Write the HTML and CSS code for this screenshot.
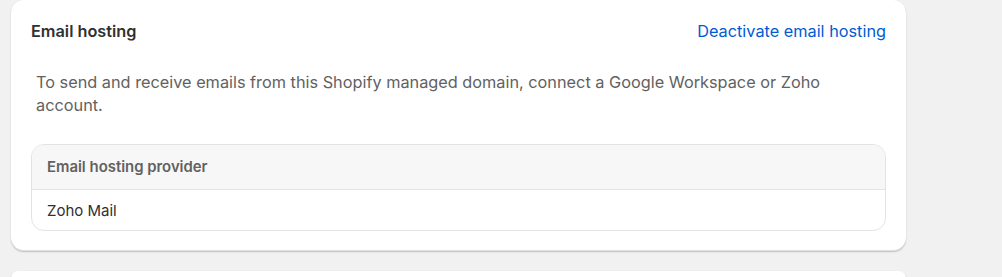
FILE: index.html
```html
<!DOCTYPE html>
<html>
<head>
<meta charset="utf-8">
<link rel="stylesheet" href="styles.css">
</head>
<body>
<div class="page">
  <section class="card">
    <div class="card-head">
      <h2 class="title">Email hosting</h2>
      <a class="link" href="#">Deactivate email hosting</a>
    </div>
    <p class="desc">To send and receive emails from this Shopify managed domain, connect a Google Workspace or Zoho account.</p>
    <div class="table">
      <div class="th">Email hosting provider</div>
      <div class="td">Zoho Mail</div>
    </div>
  </section>
  <section class="card next"></section>
</div>
</body>
</html>
```
FILE: styles.css
```css
html, body {
  margin: 0;
  padding: 0;
  background: #f1f1f1;
  font-family: Inter, "Noto Sans", sans-serif;
  overflow: hidden;
}
.page {
  padding: 0 96px 0 11px;
  display: flex;
  flex-direction: column;
  gap: 20px;
}
.card {
  background: #fff;
  border-radius: 13px;
  box-shadow: 0 1px 0 0 rgba(26,26,26,0.07), 0 1px 2px rgba(0,0,0,0.15), inset 0 -1px 0 rgba(0,0,0,0.12);
  padding: 18px 20px 20px 20px;
}
.card-head {
  display: flex;
  justify-content: space-between;
  align-items: center;
  height: 26px;
}
.title {
  margin: 0;
  font-size: 16.3px;
  font-weight: 600;
  color: #303030;
}
.link {
  color: #005bd3;
  text-decoration: none;
  font-size: 16.3px;
}
.desc {
  margin: 27px 0 0 5px;
  font-size: 16.3px;
  line-height: 23px;
  color: #616161;
}
.table {
  margin-top: 27px;
  border: 1px solid #e3e3e3;
  border-radius: 13px;
  overflow: hidden;
}
.th {
  background: #f7f7f7;
  border-bottom: 1px solid #e3e3e3;
  height: 44px;
  display: flex;
  align-items: center;
  padding-left: 15px;
  font-size: 14.9px;
  font-weight: 600;
  color: #616161;
}
.td {
  height: 40px;
  display: flex;
  align-items: center;
  padding-left: 15px;
  font-size: 15px;
  color: #303030;
}
.next {
  height: 7px;
  padding: 0;
  border-radius: 13px 13px 0 0;
}
```
